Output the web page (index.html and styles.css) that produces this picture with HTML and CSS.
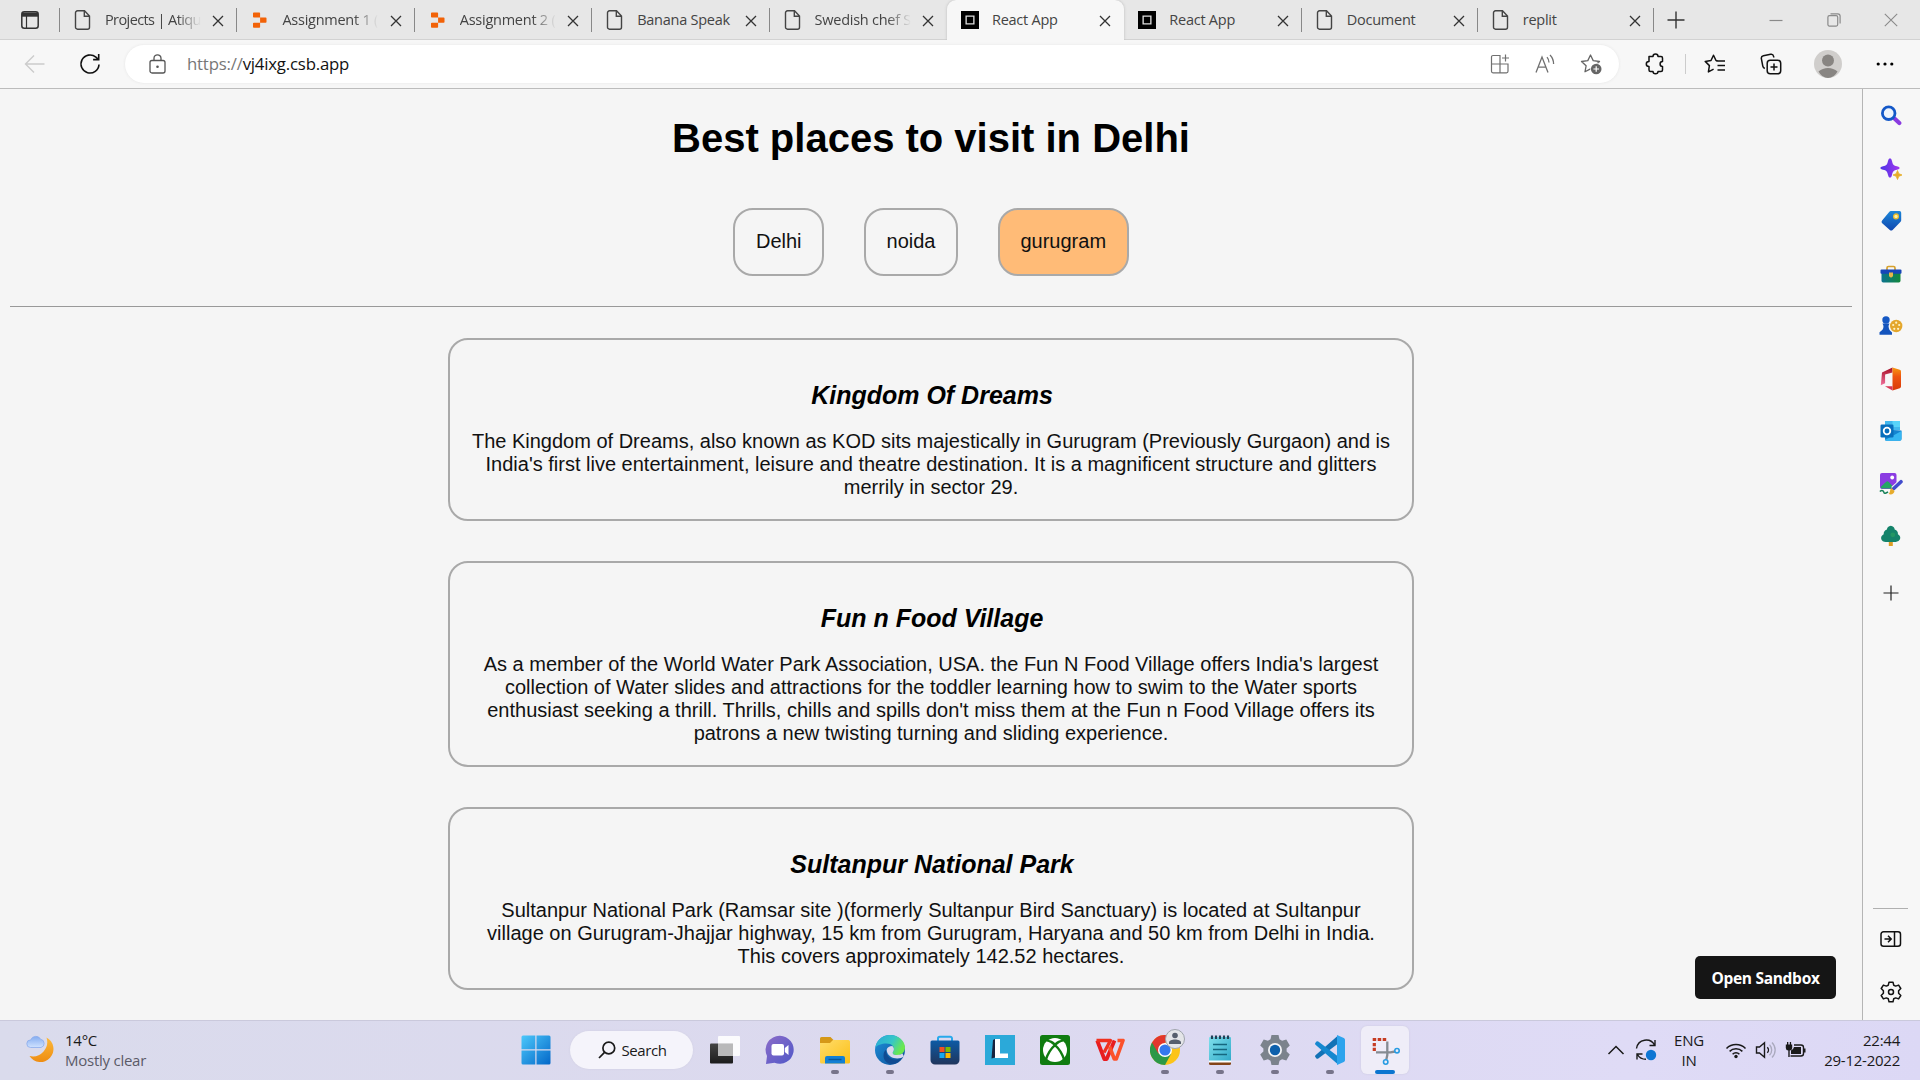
FILE: index.html
```html
<!DOCTYPE html>
<html lang="en">
<head>
<meta charset="utf-8">
<title>React App</title>
<link rel="stylesheet" href="styles.css">
</head>
<body>
<svg class="defs" width="0" height="0">
  <defs>
    <symbol id="doc" viewBox="0 0 18 20"><path d="M3.5 .8h7l5 5.2v11.2a2 2 0 0 1-2 2h-10a2 2 0 0 1-2-2V2.8a2 2 0 0 1 2-2zM10.3 1v5.2h5" fill="none" stroke="#444" stroke-width="1.4"/></symbol>
    <symbol id="replit" viewBox="0 0 18 20"><path d="M2.8 2.5h5.500a.8.8 0 0 1 .8.8v4.200H2.800a.8.8 0 0 1-.8-.8V3.300a.8.8 0 0 1 .8-.8zM9.100 7.500h5.600a.8.8 0 0 1 .8.8v3.600a.8.8 0 0 1-.8.8H9.100zM2.800 12.700h6.300v4.200a.8.8 0 0 1-.8.8H2.800a.8.8 0 0 1-.8-.8v-3.400a.8.8 0 0 1 .8-.8z" fill="#f26207"/></symbol>
    <symbol id="csb" viewBox="0 0 20 20"><path d="M0 0h20v20H0z" fill="#000"/><path d="M5.700 5.700h8.600v8.600H5.700z" fill="none" stroke="#ddd" stroke-width="1.500"/></symbol>
    <symbol id="close" viewBox="0 0 12 12"><path d="M1 1l10 10M11 1L1 11" fill="none" stroke="#333" stroke-width="1.300"/></symbol>
    <linearGradient id="win" x1="0" y1="0" x2="1" y2="1"><stop offset="0" stop-color="#4cc8fb"/><stop offset="1" stop-color="#0367c8"/></linearGradient>
    <linearGradient id="moon" x1="0" y1="0" x2="0" y2="1"><stop offset="0" stop-color="#fcb93b"/><stop offset="1" stop-color="#ee8d12"/></linearGradient>
    <linearGradient id="cloud" x1="0" y1="0" x2="0" y2="1"><stop offset="0" stop-color="#84acf0"/><stop offset="1" stop-color="#cfe2ff"/></linearGradient>
    <linearGradient id="task" x1="0" y1="0" x2="0" y2="1"><stop offset="0" stop-color="#444"/><stop offset="1" stop-color="#1c1c1c"/></linearGradient>
    <linearGradient id="chat" x1="0" y1="0" x2="1" y2="1"><stop offset="0" stop-color="#8c6cc8"/><stop offset="1" stop-color="#5058c8"/></linearGradient>
    <linearGradient id="folder" x1="0" y1="0" x2="1" y2="1"><stop offset="0" stop-color="#ffdc6a"/><stop offset="1" stop-color="#fbc017"/></linearGradient>
    <linearGradient id="edgetop" x1="0" y1="0" x2="1" y2=".4"><stop offset="0" stop-color="#2aa9d8"/><stop offset=".6" stop-color="#36c6c8"/><stop offset="1" stop-color="#6be84e"/></linearGradient>
    <linearGradient id="edgelow" x1="0" y1="0" x2="1" y2="1"><stop offset="0" stop-color="#1e92dc"/><stop offset="1" stop-color="#0d4d96"/></linearGradient>
    <linearGradient id="store" x1="0" y1="0" x2="0" y2="1"><stop offset="0" stop-color="#0d5ba5"/><stop offset="1" stop-color="#20355c"/></linearGradient>
    <linearGradient id="note" x1="0" y1="0" x2="1" y2="1"><stop offset="0" stop-color="#7fe0ec"/><stop offset="1" stop-color="#2fa8c8"/></linearGradient>
    <linearGradient id="spark" x1="0" y1="0" x2="1" y2="0"><stop offset="0" stop-color="#4b34e6"/><stop offset="1" stop-color="#a338ee"/></linearGradient>
    <linearGradient id="tag" x1="0" y1="0" x2="0" y2="1"><stop offset="0" stop-color="#1c86d8"/><stop offset="1" stop-color="#1048b0"/></linearGradient>
    <linearGradient id="box" x1="0" y1="0" x2="1" y2="0"><stop offset="0" stop-color="#0c7390"/><stop offset="1" stop-color="#13883c"/></linearGradient>
    <linearGradient id="office" x1="0" y1="0" x2="0" y2="1"><stop offset="0" stop-color="#f89a10"/><stop offset=".4" stop-color="#ee5411"/><stop offset="1" stop-color="#d83a08"/></linearGradient>
    <linearGradient id="officel" x1="0" y1="0" x2="0" y2="1"><stop offset="0" stop-color="#a50e24"/><stop offset="1" stop-color="#f0709c"/></linearGradient>
  </defs>
</svg>

<header class="tabstrip">
  <div class="tab-actions"><svg width="18" height="18" viewBox="0 0 18 18"><rect x=".8" y=".8" width="16.400" height="16.400" rx="2.500" fill="none" stroke="#333" stroke-width="1.500"/><path d="M1 1.500h16v4.200H1z" fill="#333"/><path d="M5.500 5v12" stroke="#333" stroke-width="1.200"/></svg></div>
  <div class="tab"><svg class="fav"><use href="#doc"/></svg><span class="tab-title fade tight">Projects | Atiqu</span><svg class="x"><use href="#close"/></svg></div>
  <div class="tab"><svg class="fav"><use href="#replit"/></svg><span class="tab-title fade">Assignment 1 (</span><svg class="x"><use href="#close"/></svg></div>
  <div class="tab"><svg class="fav"><use href="#replit"/></svg><span class="tab-title fade">Assignment 2 (</span><svg class="x"><use href="#close"/></svg></div>
  <div class="tab"><svg class="fav"><use href="#doc"/></svg><span class="tab-title">Banana Speak</span><svg class="x"><use href="#close"/></svg></div>
  <div class="tab before-active"><svg class="fav"><use href="#doc"/></svg><span class="tab-title fade">Swedish chef S</span><svg class="x"><use href="#close"/></svg></div>
  <div class="tab active"><svg class="fav"><use href="#csb"/></svg><span class="tab-title">React App</span><svg class="x"><use href="#close"/></svg></div>
  <div class="tab"><svg class="fav"><use href="#csb"/></svg><span class="tab-title">React App</span><svg class="x"><use href="#close"/></svg></div>
  <div class="tab narrow"><svg class="fav"><use href="#doc"/></svg><span class="tab-title">Document</span><svg class="x"><use href="#close"/></svg></div>
  <div class="tab narrow"><svg class="fav"><use href="#doc"/></svg><span class="tab-title">replit</span><svg class="x"><use href="#close"/></svg></div>
  <div class="new-tab"><svg width="18" height="18" viewBox="0 0 18 18"><path d="M9 .5v17M.5 9h17" stroke="#333" stroke-width="1.400"/></svg></div>
  <div class="window-controls">
    <div><svg width="14" height="14" viewBox="0 0 14 14"><path d="M.5 7.500h13" stroke="#8a8a8a" stroke-width="1.200"/></svg></div>
    <div><svg width="14" height="14" viewBox="0 0 14 14"><rect x=".9" y="2.700" width="9.800" height="10.400" rx="1.500" fill="none" stroke="#8a8a8a" stroke-width="1.200"/><path d="M3.500.8h7.300a2.300 2.300 0 0 1 2.300 2.300v7.500" fill="none" stroke="#8a8a8a" stroke-width="1.200"/></svg></div>
    <div><svg width="14" height="14" viewBox="0 0 14 14"><path d="M.8.8l12.400 12.400M13.200.8L.8 13.200" stroke="#8a8a8a" stroke-width="1.100"/></svg></div>
  </div>
</header>

<nav class="toolbar">
  <div class="nav-btn back"><svg width="22" height="20" viewBox="0 0 22 20"><path d="M20.500 10H1.500M10 1.500L1.500 10l8.500 8.500" fill="none" stroke="#ccc" stroke-width="1.400"/></svg></div>
  <div class="nav-btn"><svg width="22" height="22" viewBox="0 0 22 22"><path d="M20 11.500a9 9 0 1 1-3.100-7.300l2.600 2.300M19.700 1v5.600h-5.600" fill="none" stroke="#111" stroke-width="1.600"/></svg></div>
  <div class="address">
    <svg class="lock" width="17" height="20" viewBox="0 0 17 20"><rect x="1" y="6.500" width="15" height="12.500" rx="2" fill="none" stroke="#555" stroke-width="1.300"/><path d="M5 6.500V4.300a3.500 3.500 0 0 1 7 0v2.200" fill="none" stroke="#555" stroke-width="1.300"/><circle cx="8.500" cy="12.700" r="1.300" fill="#555"/></svg>
    <span class="url"><span class="scheme">https://</span>vj4ixg.csb.app</span>
    <div class="address-icons">
      <svg width="20" height="20" viewBox="0 0 20 20"><path d="M10 18.800V1.500H3a1.500 1.500 0 0 0-1.500 1.500v14.300A1.500 1.500 0 0 0 3 18.800h13.500a1.500 1.500 0 0 0 1.500-1.500V10H1.500M15.500.5v7M12 4h7" fill="none" stroke="#707070" stroke-width="1.200"/></svg>
      <svg width="20" height="20" viewBox="0 0 20 20"><path d="M1 18.500L7 3l6 15.500M3 13.200h8M12 3.200c1.300 1.600 2 3 2 5.200M15 1c2.300 2.400 3.600 4.900 3.600 9" fill="none" stroke="#707070" stroke-width="1.300"/></svg>
      <svg width="22" height="22" viewBox="0 0 22 22"><path d="M10.500 2l2.700 5.600 6.300.9-4.600 4.300 1 6-5.400-2.900-5.500 2.900 1.100-6L1.500 8.500l6.300-.9z" fill="none" stroke="#666" stroke-width="1.300" stroke-linejoin="round"/><circle cx="16.200" cy="16" r="6" fill="#fff"/><circle cx="16.200" cy="16" r="5.300" fill="#666"/><path d="M16.200 13.200v5.600M13.400 16h5.600" stroke="#fff" stroke-width="1.200"/></svg>
    </div>
  </div>
  <div class="tool puzzle"><svg width="20" height="22" viewBox="0 0 20 22"><path d="M4 3.500h4c0-3.300 5-3.300 5 0h3a1.500 1.500 0 0 1 1.500 1.500v3.500c-3.200 0-3.200 5 0 5V17a1.500 1.500 0 0 1-1.500 1.500h-3c0 3-5 3-5 0H5.500A1.500 1.500 0 0 1 4 17v-3.500c-3.600 0-3.600-5 0-5z" fill="none" stroke="#111" stroke-width="1.500" stroke-linejoin="round"/></svg></div>
  <div class="tool-sep"></div>
  <div class="tool favs"><svg width="22" height="20" viewBox="0 0 22 20"><path d="M13.500 6.800L12 6.500 9.500 1.200 7 6.500l-5.800.9 4.200 4.200-1 6.300 5.200-2.800M12 7h9M13.500 11.500H21M13.500 16H21" fill="none" stroke="#111" stroke-width="1.500" stroke-linejoin="round"/></svg></div>
  <div class="tool coll"><svg width="22" height="22" viewBox="0 0 22 22"><rect x="7.200" y="7.200" width="13.500" height="13.500" rx="3" fill="none" stroke="#111" stroke-width="1.500"/><path d="M4.800 15.500C3.500 15 3 14.300 2.800 13.200L1.400 5.800c-.3-1.500.6-2.700 2-3L10.600 1.300c1.500-.3 2.700.6 3 2l.2 1.200M14 10.500v7M10.500 14h7" fill="none" stroke="#111" stroke-width="1.500"/></svg></div>
  <div class="tool avatar"><svg width="28" height="28" viewBox="0 0 28 28"><circle cx="14" cy="14" r="14" fill="#d0cecc"/><circle cx="14" cy="10.600" r="6" fill="#888582"/><path d="M4.500 21.500q4-3.600 9.500-3.600t9.500 3.600q-3.500 6.500-9.500 6.500t-9.500-6.500z" fill="#888582"/></svg></div>
  <div class="tool more"><svg width="18" height="4" viewBox="0 0 18 4"><circle cx="2.200" cy="2" r="1.600"/><circle cx="9" cy="2" r="1.600"/><circle cx="15.800" cy="2" r="1.600"/></svg></div>
</nav>

<div class="content">
  <main class="page">
    <h1>Best places to visit in Delhi</h1>
    <div class="cities">
      <button>Delhi</button>
      <button>noida</button>
      <button class="selected">gurugram</button>
    </div>
    <hr>
    <section class="places">
      <article><h3>Kingdom Of Dreams</h3><p>The Kingdom of Dreams, also known as KOD sits majestically in Gurugram (Previously Gurgaon) and is India's first live entertainment, leisure and theatre destination. It is a magnificent structure and glitters merrily in sector 29.</p></article>
      <article><h3>Fun n Food Village</h3><p>As a member of the World Water Park Association, USA. the Fun N Food Village offers India's largest collection of Water slides and attractions for the toddler learning how to swim to the Water sports enthusiast seeking a thrill. Thrills, chills and spills don't miss them at the Fun n Food Village offers its patrons a new twisting turning and sliding experience.</p></article>
      <article><h3>Sultanpur National Park</h3><p>Sultanpur National Park (Ramsar site )(formerly Sultanpur Bird Sanctuary) is located at Sultanpur village on Gurugram-Jhajjar highway, 15 km from Gurugram, Haryana and 50 km from Delhi in India. This covers approximately 142.52 hectares.</p></article>
    </section>
    <a class="sandbox"><span>Open Sandbox</span></a>
  </main>
  <aside class="sidebar">
    <div class="side"><svg width="22" height="22" viewBox="0 0 22 22"><path d="M14.500 13.500l4.800 4.500" stroke="#8a3be0" stroke-width="4.200" stroke-linecap="round"/><circle cx="8.700" cy="8.200" r="6.300" fill="#eef4fc" stroke="#1458c8" stroke-width="2.800"/></svg></div>
    <div class="side"><svg width="22" height="22" viewBox="0 0 22 22"><path d="M10 .3q1.500 0 2 2.700c.8 3.800 1.600 4.600 5 5.300q2.700.5 2.700 1.700t-2.700 1.700c-3.400.7-4.200 1.500-5 5.300q-.5 2.700-2 2.700t-2-2.700c-.8-3.800-1.600-4.600-5-5.300Q.3 11.200.3 10T3 8.300c3.400-.7 4.200-1.500 5-5.300q.5-2.700 2-2.700z" fill="url(#spark)"/><path d="M17.500 12.500l1.300 3.200 3.200 1.300-3.200 1.300-1.300 3.200-1.300-3.200-3.200-1.300 3.200-1.300z" fill="#e6ad28" stroke="#e6ad28" stroke-width=".8"/></svg></div>
    <div class="side"><svg width="22" height="22" viewBox="0 0 22 22"><path d="M10.800 1h8.700A1.700 1.700 0 0 1 21.200 2.700v7.600a2 2 0 0 1-.6 1.400l-8 8.200a2 2 0 0 1-2.800 0l-7.600-6.600a2 2 0 0 1-.1-2.800L9.400 1.700a2 2 0 0 1 1.400-.7z" fill="url(#tag)"/><circle cx="16" cy="6.400" r="2.400" fill="#fff0a0" stroke="#e7b92f" stroke-width="1.300"/></svg></div>
    <div class="side"><svg width="22" height="22" viewBox="0 0 22 22"><path d="M7 8V5a1.500 1.500 0 0 1 1.500-1.500h5A1.500 1.500 0 0 1 15 5v3" fill="none" stroke="#d7a12c" stroke-width="1.700"/><path d="M1.500 9h19v8.800a1.700 1.700 0 0 1-1.700 1.700H3.200a1.700 1.700 0 0 1-1.700-1.700z" fill="url(#box)"/><rect x=".5" y="6.500" width="21" height="4.200" rx="1" fill="#1746b8"/><path d="M9 9.500h4v3.800l-2 1.500-2-1.500z" fill="#e7b64a"/></svg></div>
    <div class="side"><svg width="24" height="22" viewBox="0 0 24 22"><circle cx="7" cy="5" r="3.700" fill="#1558c4"/><path d="M3.500 8.500h7l-1 2.500c.3 3 1 4.500 3.500 6.500v2.300H.5v-2.500C3.500 15 4.500 14 4.500 11z" fill="#1454bd"/><ellipse cx="17.200" cy="11" rx="6.200" ry="6.200" fill="#e4a72c"/><g fill="#fff4c8"><circle cx="17.200" cy="7.700" r="1.100"/><circle cx="20.200" cy="10" r="1.100"/><circle cx="14.200" cy="10" r="1.100"/><circle cx="15.300" cy="13.800" r="1.100"/><circle cx="19.100" cy="13.800" r="1.100"/></g></svg></div>
    <div class="side"><svg width="22" height="24" viewBox="0 0 22 24"><path d="M12.500.5L2 5.500.8 18.200l4.300-1.900V7.500l7.400-2z" fill="url(#officel)"/><path d="M12.500.5l7.300 2.300a1.700 1.700 0 0 1 1.200 1.600v15.200a1.700 1.700 0 0 1-1.200 1.600l-7.300 2.300z" fill="url(#office)"/><path d="M12.500 23.500L5 19.300h7.500z" fill="#d93654"/></svg></div>
    <div class="side"><svg width="22" height="22" viewBox="0 0 22 22"><path d="M5 1h15v9H5z" fill="#42b8ee"/><path d="M12.500 1H20v6h-7.500z" fill="#58d4fa"/><path d="M5 10h8l8.500.5V19A1.800 1.800 0 0 1 19.700 20.800H6.500A1.500 1.500 0 0 1 5 19.300z" fill="#1484d0"/><path d="M5 20L21.500 11v8a1.800 1.800 0 0 1-1.800 1.800H6z" fill="#36b6f2"/><rect x=".5" y="4.500" width="13" height="13" rx="1.300" fill="#086ebc"/><circle cx="7" cy="11" r="3.300" fill="none" stroke="#fff" stroke-width="1.800"/></svg></div>
    <div class="side"><svg width="24" height="24" viewBox="0 0 24 24"><rect x="1" y="1" width="16.500" height="16" rx="2" fill="#8b3ce2"/><path d="M1.500 15l5.500-5a2 2 0 0 1 2.800 0l6 6.500H2.500z" fill="#24a566"/><circle cx="13.200" cy="5.500" r="1.900" fill="#fff"/><path d="M.8 19.500c3-2.500 4 .2 4.200 1.200s2 .8 4-.8" fill="none" stroke="#168057" stroke-width="1.500"/><path d="M22.500 9.500L14 17" stroke="#f7f7f7" stroke-width="5.500"/><path d="M22 9.700L14.800 16.500" stroke="#414ccc" stroke-width="3.500" stroke-linecap="round"/><path d="M12.500 16l3 3c-.5 3-3 4-6 3 2-1 1-4.500 3-6z" fill="#e7ac2c"/></svg></div>
    <div class="side"><svg width="22" height="22" viewBox="0 0 22 22"><path d="M8.800 16h4v5h-4z" fill="#dd9e25"/><path d="M10.800.8q3.500.5 3.900 3.800 3.700 1.500 3.200 4.700 3.200 2 2.100 5-1.300 2.800-4.500 2.700H5.800Q2.200 17 1.200 14q-.6-3 2.500-4.700Q3.300 6 6.900 4.600 7.300 1.300 10.800.8z" fill="#14836a"/><circle cx="12.800" cy="9.800" r="2.400" fill="#239664"/></svg></div>
    <div class="side add"><svg width="16" height="16" viewBox="0 0 16 16"><path d="M8 .5v15M.5 8h15" stroke="#222" stroke-width="1.200"/></svg></div>
    <div class="side-bottom">
      <div class="side"><svg width="22" height="18" viewBox="0 0 22 18"><rect x="1" y="1.800" width="19.500" height="14.400" rx="2.500" fill="none" stroke="#111" stroke-width="1.500"/><path d="M14.500 2v14M4.500 9h6.500M8 5.800L11.200 9 8 12.200" fill="none" stroke="#111" stroke-width="1.500"/></svg></div>
      <div class="side"><svg width="22" height="22" viewBox="0 0 22 22"><path d="M9 1.200h4l.7 3 2 .9 2.900-1 2.200 3.400-2.200 2.200v2.600l2.200 2.200-2.200 3.400-2.900-1-2 .9-.7 3H9l-.7-3-2-.9-2.900 1-2.200-3.400 2.200-2.200V9.700L1.200 7.500l2.200-3.400 2.900 1 2-.9z" fill="none" stroke="#111" stroke-width="1.500" stroke-linejoin="round"/><circle cx="11" cy="11" r="2.500" fill="none" stroke="#111" stroke-width="1.500"/></svg></div>
    </div>
  </aside>
</div>

<footer class="taskbar">
  <div class="weather">
    <svg width="30" height="30" viewBox="0 0 30 30"><path d="M20.500 2.500a13 13 0 1 1-17 18.500A14.500 14.500 0 0 0 20.500 2.500z" fill="url(#moon)"/><path d="M4.500 12.500a3.800 3.800 0 0 1 .2-7.600 5.500 5.500 0 0 1 10-.6 4.200 4.200 0 0 1 .3 8.200z" fill="url(#cloud)" stroke="#8cacec" stroke-width=".8"/></svg>
    <div class="two-lines"><span>14°C</span><span class="dim">Mostly clear</span></div>
  </div>
  <div class="apps">
    <div class="app"><svg width="30" height="30" viewBox="0 0 30 30"><path d="M2 .5h12.300v13.800H.5V2A1.500 1.500 0 0 1 2 .5zM15.500.5H28A1.500 1.500 0 0 1 29.500 2v12.300h-14zM.5 15.500h13.800v14H2A1.500 1.500 0 0 1 .5 28zM15.500 15.500h14V28a1.500 1.500 0 0 1-1.500 1.500H15.500z" fill="url(#win)"/></svg></div>
    <div class="search"><svg width="18" height="18" viewBox="0 0 18 18"><circle cx="10.800" cy="7" r="5.900" fill="none" stroke="#1a1a1a" stroke-width="1.700"/><path d="M6.500 11.300L1 17" stroke="#1a1a1a" stroke-width="1.700"/></svg><span>Search</span></div>
    <div class="app"><svg width="30" height="30" viewBox="0 0 30 30"><rect x="0" y="8.500" width="23" height="20" rx="1" fill="url(#task)"/><rect x="8" y="1" width="22" height="20" rx="1" fill="#fff" opacity=".88"/><path d="M8 8.500h15V21H8z" fill="#b9b9ba"/></svg></div>
    <div class="app"><svg width="30" height="30" viewBox="0 0 30 30"><path d="M15 .8a14 14 0 1 1-5.500 27L1 29l1-8A14 14 0 0 1 15 .8z" fill="url(#chat)"/><rect x="6.500" y="9" width="12.500" height="11.500" rx="2" fill="#fff"/><path d="M19.800 13l3.700-3v10l-3.700-3z" fill="#fff"/></svg></div>
    <div class="app running"><svg width="30" height="30" viewBox="0 0 30 30"><path d="M0 3.500A1.500 1.500 0 0 1 1.500 2h9l3 3v5H0z" fill="#d59818"/><path d="M0 8h10l3-3h15.500A1.500 1.500 0 0 1 30 6.500v21A1.500 1.500 0 0 1 28.500 28.500h-27A1.500 1.500 0 0 1 0 27z" fill="url(#folder)"/><path d="M5 28.500V23a2 2 0 0 1 2-2h16a2 2 0 0 1 2 2v5.500z" fill="#1380d4"/><path d="M8.500 24.500h13" stroke="#0a5799" stroke-width="1.400"/></svg></div>
    <div class="app running"><svg width="30" height="30" viewBox="0 0 30 30"><circle cx="15" cy="15" r="15" fill="url(#edgelow)"/><path d="M.2 13C1.500 5 7.500 0 15 0c8.500 0 15 6 15 12.500 0 5-3.700 7.500-8 7.500-3.500 0-5.500-1.500-3.500-4C20 12 17 8.500 11.500 8.500 6.500 8.500 2 10 .2 13z" fill="url(#edgetop)"/><path d="M11.500 15c1-3 3-4 5.800-4 1.800 1.500 2 3.500 1.200 5-2 2.500 0 4 3.500 4 2.500 0 4.500-.8 5.500-1.500l1.500 3c-4.500 3.500-16 3-17.500-6.500z" fill="#d9d8ee"/><path d="M11.500 14.500c-1.500 6 5 12.500 14.500 9.500-5 8-17.500 6-17.500-3.500 0-3 1.200-5 3-6z" fill="#104b92"/></svg></div>
    <div class="app"><svg width="30" height="30" viewBox="0 0 30 30"><path d="M8 7V3.500A1.800 1.800 0 0 1 9.800 1.700h10.400A1.800 1.800 0 0 1 22 3.500V7" fill="none" stroke="#29a9eb" stroke-width="2"/><path d="M2 5.500h26A1.500 1.500 0 0 1 29.500 7v18a4.500 4.500 0 0 1-4.500 4.500H5A4.500 4.500 0 0 1 .5 25V7A1.500 1.500 0 0 1 2 5.500z" fill="url(#store)"/><path d="M9.500 12h5v5h-5z" fill="#f25022"/><path d="M15.500 12h5v5h-5z" fill="#7fba00"/><path d="M9.500 18h5v5h-5z" fill="#16a8f0"/><path d="M15.500 18h5v5h-5z" fill="#ffb900"/></svg></div>
    <div class="app"><svg width="30" height="30" viewBox="0 0 30 30"><path d="M0 0h30v30H0z" fill="#2ba9d9"/><path d="M8 5L6.500 23.500l3.500-1V4z" fill="#17233e"/><path d="M10 4h5v14.500h8V23H10z" fill="#fff"/></svg></div>
    <div class="app"><svg width="30" height="30" viewBox="0 0 30 30"><rect width="30" height="30" rx="2.500" fill="#107c10"/><circle cx="15" cy="15" r="12" fill="#fff"/><path d="M5.500 25.500C7.500 19.500 10.500 14 15 10.200c4.500 3.800 7.500 9.300 9.500 15.300" fill="none" stroke="#107c10" stroke-width="2.400"/><path d="M6.500 4.800C10 4.800 12.500 6 15 8c2.500-2 5-3.200 8.500-3.200v1.700C20.500 6.500 18 9 15.500 11h-1C12 9 9.500 6.500 6.500 6.500z" fill="#107c10"/></svg></div>
    <div class="app"><svg width="30" height="24" viewBox="0 0 30 24"><path d="M2.200 2.500L9.300 21h2.400L19.500 2.500" fill="none" stroke="#e81c20" stroke-width="3.800" stroke-linejoin="round"/><path d="M1.500 2.500h14L9 14.500" fill="none" stroke="#f0301f" stroke-width="3.300" stroke-linejoin="round"/><path d="M14.500 8.500L19.300 21h2L28 2.500h-5.500" fill="none" stroke="#fb512b" stroke-width="3.600" stroke-linejoin="round"/></svg></div>
    <div class="app running chrome"><svg width="30" height="30" viewBox="0 0 30 30"><circle cx="15" cy="15" r="15" fill="#fcc419"/><path d="M15 15L2 7.500A15 15 0 0 0 15 30l6-11z" fill="#2c9847"/><path d="M2 7.500A15 15 0 0 1 28 7.500H15L8.500 18.800z" fill="#e2372c"/><circle cx="15" cy="15" r="7" fill="#fff"/><circle cx="15" cy="15" r="5.600" fill="#3478ee"/></svg><svg class="badge" width="20" height="20" viewBox="0 0 20 20"><circle cx="10" cy="10" r="9.500" fill="#e4e5e8" stroke="#9fa4ac"/><circle cx="10" cy="6.500" r="2.800" fill="#565e6c"/><path d="M4 15v-1.500c0-4 12-4 12 0V15z" fill="#565e6c"/></svg></div>
    <div class="app running"><svg width="24" height="30" viewBox="0 0 24 30"><rect x="1" y="2" width="22" height="25" rx="1" fill="url(#note)"/><path d="M1 26h22v2.500A1.500 1.500 0 0 1 21.500 30h-19A1.500 1.500 0 0 1 1 28.500z" fill="#834419"/><path d="M1 25.500h22v2H1z" fill="#fff"/><path d="M5 9.500h14M5 14.500h14M5 19.500h14" stroke="#16677f" stroke-width="1.500"/><path d="M4 .5V4M8 .5V4M12 .5V4M16 .5V4M20 .5V4" stroke="#1f4258" stroke-width="2.200"/></svg></div>
    <div class="app running"><svg width="30" height="30" viewBox="0 0 30 30"><path d="M11.500 1h7l1 4.200 2.600 1.500 4.200-1.300 3.500 6-3.200 3v3.200l3.200 3-3.500 6-4.200-1.300-2.600 1.500-1 4.200h-7l-1-4.200-2.600-1.500-4.200 1.300-3.500-6 3.200-3v-3.200l-3.200-3 3.500-6 4.200 1.300 2.600-1.500z" transform="translate(0 -1)" fill="#7b838c"/><circle cx="15" cy="15" r="7" fill="#f3f4f6"/><circle cx="15" cy="15" r="5.200" fill="#0d60ab"/></svg></div>
    <div class="app running"><svg width="30" height="30" viewBox="0 0 30 30"><path d="M22.500 1v8L3.300 23.500a1.500 1.500 0 0 1-1.900-.1L.5 22.200a1.500 1.500 0 0 1 0-2z" fill="#1272b6"/><path d="M22.500 29v-8L3.300 6.500a1.500 1.500 0 0 0-1.900.1L.5 7.800a1.500 1.500 0 0 0 0 2z" fill="#1588d0"/><path d="M22 0l6.800 3A2 2 0 0 1 30 4.700v20.500a2 2 0 0 1-1.200 1.800L22 30z" fill="#2da3ed"/></svg></div>
    <div class="app current"><svg width="30" height="30" viewBox="0 0 30 30"><path d="M2.700 4.500h13.500" fill="none" stroke="#c63c22" stroke-width="3.200" stroke-dasharray="3.500 1.500"/><path d="M4.300 8v8" fill="none" stroke="#c63c22" stroke-width="3.200" stroke-dasharray="3.300 1.500"/><path d="M17.300 6.500V20l-1 4.500M6 17.300h14.500l4.500-.8" fill="none" stroke="#858b92" stroke-width="2.300"/><circle cx="27" cy="15.700" r="2.200" fill="none" stroke="#279be2" stroke-width="1.600"/><circle cx="15.700" cy="27" r="2.200" fill="none" stroke="#279be2" stroke-width="1.600"/></svg></div>
  </div>
  <div class="tray">
    <svg class="chev" width="18" height="12" viewBox="0 0 18 12"><path d="M1.500 10L9 2.500l7.500 7.500" fill="none" stroke="#1a1a1a" stroke-width="1.500"/></svg>
    <svg class="sync" width="22" height="22" viewBox="0 0 22 22"><path d="M1.500 9.500C3 -.5 15.500 -1.500 19.500 6M20 1v5.500h-5.500M7.500 15H2v5.500M2.500 15.500c1.500 2.800 4.500 4.800 8.500 4.800" fill="none" stroke="#1a1a1a" stroke-width="1.400"/><circle cx="16" cy="16" r="5.200" fill="#0e76d3"/></svg>
    <div class="two-lines lang"><span>ENG</span><span>IN</span></div>
    <svg class="wifi" width="22" height="18" viewBox="0 0 22 18"><path d="M1.500 7.500a13.300 13.300 0 0 1 19 0M4.600 10.400a9 9 0 0 1 12.800 0M7.600 13.200a4.700 4.700 0 0 1 6.800 0" fill="none" stroke="#1a1a1a" stroke-width="1.500"/><circle cx="11" cy="15.500" r="1.700" fill="#1a1a1a"/></svg>
    <svg class="sound" width="22" height="18" viewBox="0 0 22 18"><path d="M1.500 6h3l5-4.300v14.600L4.500 12h-3zM12.300 6.200a4 4 0 0 1 0 5.600" fill="none" stroke="#1a1a1a" stroke-width="1.400"/><path d="M14.500 3.700a7.500 7.500 0 0 1 0 10.600M17 1.500a10.500 10.500 0 0 1 0 15" fill="none" stroke="#aaa9bd" stroke-width="1.300"/></svg>
    <svg class="battery" width="22" height="18" viewBox="0 0 22 18"><path d="M9 4h7a2.500 2.500 0 0 1 2.500 2.500v6A2.500 2.500 0 0 1 16 15H5.500" fill="none" stroke="#1a1a1a" stroke-width="1.400"/><path d="M9 6h7v7H6V9.500Q8.500 8.500 9 6zM19 7.500h1.500v4H19zM.8 3.500h6.400V7Q7 9.500 4.700 9.500V16H3.300V9.500Q1 9.500.8 7zM2 1h1.300v3H2zM4.800 1h1.300v3H4.800z" fill="#1a1a1a"/></svg>
    <div class="two-lines clock"><span>22:44</span><span class="date">29-12-2022</span></div>
  </div>
</footer>
</body>
</html>
```
FILE: styles.css
```css
* { box-sizing: border-box; }
body {
  margin: 0;
  width: 1920px;
  height: 1080px;
  overflow: hidden;
  display: flex;
  flex-direction: column;
  background: #f5f5f5;
  font-family: "Open Sans", "Noto Sans", sans-serif;
  color: #1a1a1a;
}
.defs { position: absolute; }
svg { display: block; flex: none; }

/* Tab strip */
.tabstrip { display: flex; flex: none; height: 40px; background: #e7e7e7; border-bottom: 1px solid #d2d2d2; }
.tab-actions { flex: none; width: 60px; display: flex; align-items: center; justify-content: center; border-right: 1px solid #888; height: 24px; margin-top: 8px; }
.tab { flex: none; width: 177.400px; height: 24px; margin-top: 8px; padding: 0 12px 0 14px; display: flex; align-items: center; border-right: 1px solid #888; }
.fav { width: 18px; height: 20px; }
.tab-title { width: 96px; margin-left: 13px; font-size: 14.500px; letter-spacing: -.25px; line-height: 24px; color: #444; white-space: nowrap; overflow: hidden; }
.tight { letter-spacing: -.6px; }
.fade { -webkit-mask-image: linear-gradient(90deg, #000 75%, transparent); mask-image: linear-gradient(90deg, #000 75%, transparent); }
.x { width: 12px; height: 12px; margin-left: auto; margin-top: 1px; }
.before-active { border-right-color: transparent; }
.tab.active { height: 40px; margin-top: 0; background: #f7f7f7; border-right: 0; border-radius: 9px 9px 0 0; box-shadow: 0 0 3px #bbb; clip-path: inset(0 -4px 0 -4px); padding-right: 13px; }
.tab.narrow { width: 176px; }
.new-tab { width: 45px; display: flex; align-items: center; justify-content: center; }
.window-controls { margin-left: auto; display: flex; }
.window-controls div { width: 57.500px; display: flex; align-items: center; justify-content: center; }

/* Toolbar */
.toolbar { display: flex; flex: none; align-items: center; height: 49px; background: #f7f7f7; border-bottom: 1px solid #bcbcbc; }
.nav-btn { width: 55px; display: flex; justify-content: center; }
.back { margin-left: 7px; }
.address { width: 1494px; height: 38px; margin-left: 8px; padding: 0 17px 0 24px; display: flex; align-items: center; border-radius: 19px; background: #fff; box-shadow: 0 0 3px #e4e4e4; }
.url { margin-left: 21px; margin-bottom: 2px; font-size: 16.800px; letter-spacing: -.2px; color: #111; }
.scheme { color: #777; }
.address-icons { margin-left: auto; display: flex; gap: 25px; align-items: center; }
.tool { display: flex; justify-content: center; }
.puzzle { width: 66px; padding-left: 5px; }
.tool-sep { width: 1px; height: 20px; background: #ccc; }
.favs { width: 58px; }
.coll { width: 53px; }
.avatar { width: 62px; }
.more { width: 52px; }

/* Web page */
.content { display: flex; flex: 1; min-height: 0; }
.page { position: relative; width: 1862px; padding: 26px 10px 0; font-family: "Liberation Sans", Arial, sans-serif; color: #000; }
.page h1 { margin: 0; font-size: 40px; line-height: 46px; text-align: center; }
.cities { display: flex; justify-content: center; gap: 40px; margin-top: 47px; }
.cities button { height: 68px; padding: 0 20.500px 2px; border: 2px solid #a9a9a9; border-radius: 20px; background: transparent; font: 20px/23px "Liberation Sans", Arial, sans-serif; color: #111; }
.cities .selected { background: #ffbb77; }
.page hr { margin: 30px 0 31px; border: 0; height: 1px; background: #999; }
.places { width: 966px; margin: 0 auto; display: flex; flex-direction: column; gap: 40px; text-align: center; }
.places article { padding: 20px 21.500px; border: 2px solid #a9a9a9; border-radius: 20px; }
.places h3 { margin: 21px 0 20px; padding-left: 2px; font-size: 25px; line-height: 29px; font-style: italic; }
.places p { margin: 0; font-size: 20px; line-height: 23px; color: #111; }
.sandbox { position: absolute; right: 26px; bottom: 21px; width: 141px; height: 43px; display: flex; align-items: center; justify-content: center; background: #151515; border-radius: 5px; color: #fff; font: 700 15.500px "Open Sans", sans-serif; letter-spacing: -.3px; }

/* Edge sidebar */
.sidebar { flex: 1; display: flex; flex-direction: column; padding: 1px 2px 0 0; background: #f7f7f7; border-left: 1px solid #b5b5b5; }
.side { flex: none; height: 52.500px; display: flex; align-items: center; justify-content: center; }
.add { margin-top: 4px; }
.side-bottom { width: 35px; margin: auto auto 2px; padding-top: 4px; border-top: 1px solid #b0b0b0; }

/* Taskbar */
.taskbar { flex: none; height: 60px; display: flex; align-items: center; background: linear-gradient(90deg, #dadbec, #dcd9ef 50%, #dfdbf6 85%, #dcd8f5); box-shadow: inset 0 1px #cac9dc; font-size: 15px; }
.weather { width: 508.500px; padding-left: 26px; display: flex; align-items: center; gap: 9px; }
.two-lines { display: flex; flex-direction: column; line-height: 20px; letter-spacing: -.25px; }
.dim { color: #5a5a68; }
.apps { display: flex; align-items: center; height: 60px; }
.app { position: relative; width: 55px; height: 60px; display: flex; align-items: center; justify-content: center; }
.running::after { content: ""; position: absolute; left: 23.500px; bottom: 6px; width: 8px; height: 4px; border-radius: 2px; background: #77748a; }
.current { width: 48px; height: 48px; margin-left: 4px; border-radius: 6px; background: #efedf8; box-shadow: 0 0 2px #cac8dc; }
.current::after { content: ""; position: absolute; left: 14px; bottom: 0; width: 20px; height: 4px; border-radius: 2px; background: #0b75d0; }
.badge { position: absolute; left: 28px; top: 9px; }
.search { width: 123px; height: 38px; margin: 0 4.500px 0 6px; padding-left: 28px; display: flex; align-items: center; gap: 6px; border-radius: 19px; background: #f5f4fb; box-shadow: 0 0 2px #cfcde0; }
.search span { font-size: 15px; letter-spacing: -.4px; }
.tray { margin-left: auto; padding-right: 20px; display: flex; align-items: center; }
.sync { margin-left: 10px; }
.lang { margin-left: 16px; width: 32px; align-items: center; }
.wifi { margin-left: 20px; }
.sound { margin-left: 8px; }
.battery { margin-left: 8px; }
.clock { width: 76px; margin-left: 17px; align-items: flex-end; }
```
